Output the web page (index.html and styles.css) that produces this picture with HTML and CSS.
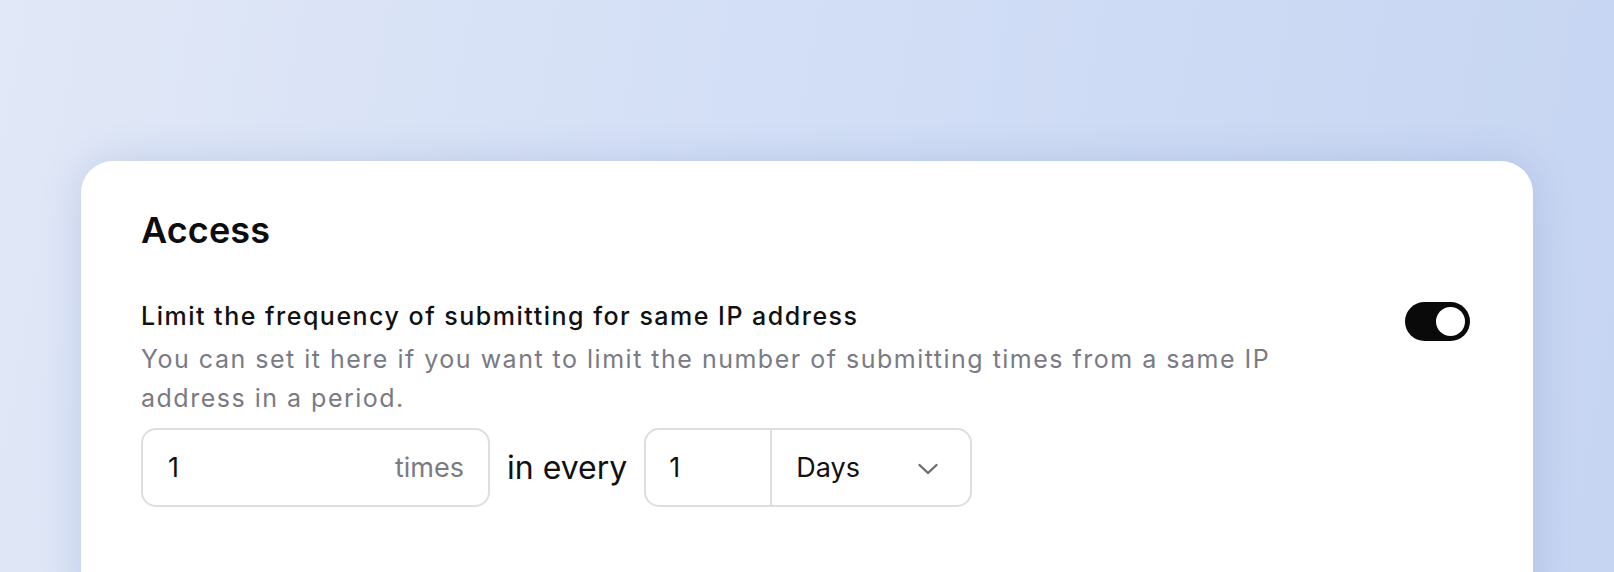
FILE: index.html
```html
<!DOCTYPE html>
<html lang="en">
<head>
<meta charset="utf-8">
<title>Access</title>
<link rel="stylesheet" href="styles.css">
</head>
<body>
<div class="page">
  <section class="card">
    <h2 class="title">Access</h2>
    <div class="setting">
      <div class="setting-text">
        <div class="label">Limit the frequency of submitting for same IP address</div>
        <p class="desc">You can set it here if you want to limit the number of submitting times from a same IP address in a period.</p>
      </div>
      <div class="toggle" role="switch" aria-checked="true"><span class="knob"></span></div>
    </div>
    <div class="controls">
      <div class="box box-times">
        <span class="val">1</span>
        <span class="suffix">times</span>
      </div>
      <span class="in-every">in every</span>
      <div class="box box-period">
        <span class="period-num">1</span>
        <span class="period-unit">
          <span class="val">Days</span>
          <svg class="chev" width="22" height="12" viewBox="0 0 22 12" fill="none"><path d="M2.5 2l8.5 8 8.5-8" stroke="#6b6b73" stroke-width="2.4" stroke-linecap="round" stroke-linejoin="round"/></svg>
        </span>
      </div>
    </div>
  </section>
</div>
</body>
</html>
```
FILE: styles.css
```css
html, body {
  margin: 0;
  padding: 0;
}
body {
  width: 1614px;
  height: 572px;
  overflow: hidden;
  background: linear-gradient(100deg, #e1e8f7 0%, #d3dff6 45%, #c6d5f2 100%);
  font-family: Inter, "Liberation Sans", sans-serif;
  color: #0d0d0d;
}
.page {
  padding: 161px 81px 0 81px;
}
.card {
  background: #ffffff;
  border-radius: 32px;
  min-height: 460px;
  padding: 47px 63px 0 60px;
  box-shadow: 0 2px 40px rgba(70, 100, 170, 0.20);
  box-sizing: border-box;
}
.title {
  margin: 0;
  font-size: 36px;
  line-height: 44px;
  font-weight: 600;
  letter-spacing: 0.1px;
  color: #0d0d0d;
}
.setting {
  margin-top: 46px;
  display: flex;
  justify-content: space-between;
  align-items: flex-start;
}
.setting-text {
  width: 1200px;
}
.label {
  font-size: 25px;
  line-height: 36px;
  font-weight: 500;
  letter-spacing: 1.5px;
  color: #111111;
}
.desc {
  margin: 6px 0 0 0;
  font-size: 25px;
  line-height: 39px;
  font-weight: 400;
  letter-spacing: 1.5px;
  color: #7a7a84;
}
.toggle {
  margin-top: 4px;
  width: 65px;
  height: 39px;
  border-radius: 20px;
  background: #0a0a0a;
  display: flex;
  align-items: center;
  justify-content: flex-end;
  padding: 0 5px;
  box-sizing: border-box;
}
.knob {
  width: 29px;
  height: 29px;
  border-radius: 50%;
  background: #ffffff;
}
.controls {
  margin-top: 10px;
  display: flex;
  align-items: center;
  gap: 17px;
}
.box {
  height: 79px;
  box-sizing: border-box;
  border: 2px solid #dedede;
  border-radius: 15px;
  display: flex;
  align-items: center;
  font-size: 27px;
  color: #111111;
}
.box-times {
  width: 349px;
  padding: 0 24px 0 25px;
  justify-content: space-between;
}
.suffix {
  color: #7a7a84;
}
.in-every {
  font-size: 32px;
  color: #111111;
}
.box-period {
  width: 328px;
}
.period-num {
  width: 126px;
  height: 100%;
  box-sizing: border-box;
  padding-left: 23px;
  display: flex;
  align-items: center;
  border-right: 2px solid #dedede;
}
.period-unit {
  flex: 1;
  display: flex;
  align-items: center;
  justify-content: space-between;
  padding: 0 31px 0 24px;
}
.chev {
  display: block;
  margin-top: 2px;
}
```
